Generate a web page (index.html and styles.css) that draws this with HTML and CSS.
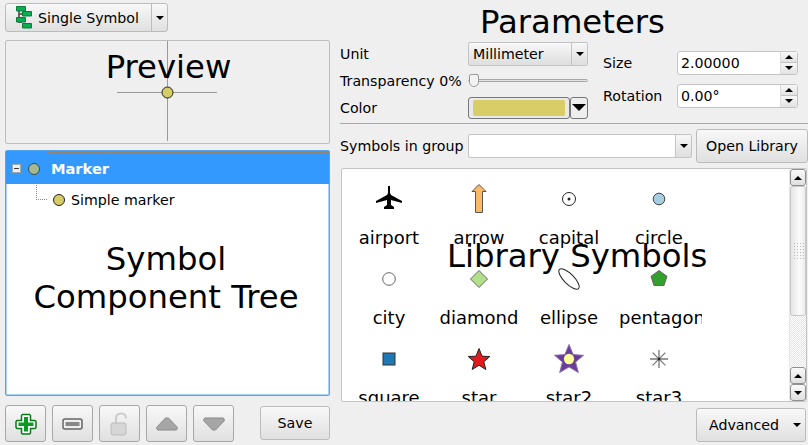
FILE: index.html
```html
<!DOCTYPE html>
<html lang="en">
<head>
    <meta charset="UTF-8">
    <title>Symbol Selector</title>
    <link rel="stylesheet" href="styles.css">
</head>
<body>
    <div class="dialog">
        <div class="left">
            <div class="split-button">
                <div class="split-main">
                    <svg width="16" height="23" viewBox="0 0 16 23"><path d="M3 5v11h3 M3 8h5" fill="none" stroke="#666" stroke-width="2"/><path d="M.5.5h9v4.500h-9z M6.500 5.500h9v4.500h-9z M.5 11.500h9v4.500h-9z M6.500 17.500h9v4.500h-9z" fill="#07ad50" stroke="#0b7a3c"/></svg>
                    <span>Single Symbol</span>
                </div>
                <div class="split-arrow"><i class="arrow-down"></i></div>
            </div>

            <div class="preview">
                <svg class="preview-cross" width="325" height="104" viewBox="0 0 325 104">
                    <path d="M112 52.500h100 M162.500 1v100" stroke="#999" fill="none"/>
                    <circle cx="162.500" cy="52.500" r="5.500" fill="#d6cc66" stroke="#222"/>
                </svg>
                <div class="annotation annotation-preview">Preview</div>
            </div>

            <div class="tree">
                <div class="tree-row tree-row-selected">
                    <span class="expander"></span>
                    <svg width="14" height="14" viewBox="0 0 14 14"><circle cx="7" cy="7" r="5.500" fill="#a5b88f" stroke="#2f4f55"/></svg>
                    <span class="tree-label">Marker</span>
                </div>
                <div class="tree-row tree-row-child">
                    <span class="elbow"></span>
                    <svg width="14" height="14" viewBox="0 0 14 14"><circle cx="7" cy="7" r="5.500" fill="#d6cc66" stroke="#222"/></svg>
                    <span>Simple marker</span>
                </div>
                <div class="annotation annotation-tree">Symbol<br>Component Tree</div>
            </div>

            <div class="toolbar">
                <button class="tool">
                    <svg width="22" height="22" viewBox="0 0 22 22"><path d="M7.500 1.500h7l1 1v5h4.500l1 1v6l-1 1h-4.500v4.500l-1 1h-7l-1-1v-4.500H2l-1-1v-6l1-1h4.500v-5z" fill="#fff" stroke="#067a16" stroke-width="1.500"/><path d="M9 4h4v5.500h5.500v3.500H13v5.500H9V13H3.500V9.500H9z" fill="#0c9a22"/></svg>
                </button>
                <button class="tool">
                    <svg width="22" height="14" viewBox="0 0 22 14"><rect x="1" y="2" width="19" height="10" rx="2" fill="#eee" stroke="#666" stroke-width="1.500"/><rect x="3.500" y="5" width="14" height="4" fill="#888"/></svg>
                </button>
                <button class="tool">
                    <svg width="20" height="24" viewBox="0 0 20 24"><path d="M6 11V6.500C6 3 8.500 1.500 11 1.500S16 3 16 6.500" fill="none" stroke="#ccc" stroke-width="2"/><rect x="1" y="11" width="15" height="12" rx="2" fill="#d6d6d6" stroke="#bbb"/></svg>
                </button>
                <button class="tool">
                    <svg width="22" height="14" viewBox="0 0 22 14"><path d="M9.500 1h3L21.500 10.500 20.500 13h-19L.5 10.500z" fill="#a6a6a6" stroke="#8a8a8a"/></svg>
                </button>
                <button class="tool">
                    <svg width="22" height="14" viewBox="0 0 22 14"><path d="M1.500 1h19l1 2.500L12.500 13h-3L.5 3.500z" fill="#a6a6a6" stroke="#8a8a8a"/></svg>
                </button>
                <button class="btn save">Save</button>
            </div>
        </div>

        <div class="right">
            <div class="annotation annotation-params">Parameters</div>
            <div class="params">
                <div class="params-left">
                    <div class="param-row">
                        <label>Unit</label>
                        <div class="combo combo-unit"><span>Millimeter</span><div class="combo-arrow"><i class="arrow-down"></i></div></div>
                    </div>
                    <div class="param-row">
                        <label>Transparency 0%</label>
                        <div class="slider"><span class="slider-handle"></span></div>
                    </div>
                    <div class="param-row">
                        <label>Color</label>
                        <div class="color-btn"><span class="swatch"></span></div>
                        <div class="color-drop"><i class="arrow-big"></i></div>
                    </div>
                </div>
                <div class="params-right">
                    <div class="param-row">
                        <label>Size</label>
                        <div class="spin"><span>2.00000</span><div class="spin-arrows"><b><i class="arrow-up"></i></b><b><i class="arrow-down"></i></b></div></div>
                    </div>
                    <div class="param-row">
                        <label>Rotation</label>
                        <div class="spin"><span>0.00°</span><div class="spin-arrows"><b><i class="arrow-up"></i></b><b><i class="arrow-down"></i></b></div></div>
                    </div>
                </div>
            </div>

            <div class="separator"></div>

            <div class="group-row">
                <label>Symbols in group</label>
                <div class="combo combo-group"><span></span><div class="combo-arrow"><i class="arrow-down"></i></div></div>
                <button class="btn open-library">Open Library</button>
            </div>

            <div class="library">
                <div class="symbols">
                    <div class="symbol">
                        <svg width="30" height="30" viewBox="0 0 30 30"><path d="M14 2h2v7l1 2 11 6v2l-11-3v5l3 2v2h-10v-2l3-2v-5L2 19v-2l11-6 1-2z" fill="#000"/></svg>
                        <span>airport</span>
                    </div>
                    <div class="symbol">
                        <svg width="30" height="30" viewBox="0 0 30 30"><path d="M15 .5l7 7h-3.500v21h-7v-21H8z" fill="#f9b967" stroke="#555"/></svg>
                        <span>arrow</span>
                    </div>
                    <div class="symbol">
                        <svg width="30" height="30" viewBox="0 0 30 30"><circle cx="15" cy="15" r="6.500" fill="#fff" stroke="#222"/><circle cx="15" cy="15" r="1.500" fill="#222"/></svg>
                        <span>capital</span>
                    </div>
                    <div class="symbol">
                        <svg width="30" height="30" viewBox="0 0 30 30"><circle cx="15" cy="15" r="5.800" fill="#a6cee3" stroke="#444"/></svg>
                        <span>circle</span>
                    </div>
                    <div class="symbol">
                        <svg width="30" height="30" viewBox="0 0 30 30"><circle cx="15" cy="15" r="6.300" fill="#fff" stroke="#666"/></svg>
                        <span>city</span>
                    </div>
                    <div class="symbol">
                        <svg width="30" height="30" viewBox="0 0 30 30"><path d="M15 6.500l8.500 8.500-8.500 8.500L6.500 15z" fill="#b2df8a" stroke="#666"/></svg>
                        <span>diamond</span>
                    </div>
                    <div class="symbol">
                        <svg width="30" height="30" viewBox="0 0 30 30"><ellipse cx="15" cy="15" rx="13.500" ry="5" transform="rotate(45 15 15)" fill="#fff" stroke="#222"/></svg>
                        <span>ellipse</span>
                    </div>
                    <div class="symbol symbol-clipped">
                        <svg width="30" height="30" viewBox="0 0 30 30"><path d="M15 6.500l8 5.800-3 9.200h-10l-3-9.200z" fill="#33a02c" stroke="#666"/></svg>
                        <span>pentagon</span>
                    </div>
                    <div class="symbol">
                        <svg width="30" height="30" viewBox="0 0 30 30"><rect x="9" y="9" width="12" height="12" fill="#1f78b4" stroke="#333"/></svg>
                        <span>square</span>
                    </div>
                    <div class="symbol">
                        <svg width="30" height="30" viewBox="0 0 30 30"><path d="M15 4.500l3 7.700 7.800.3-6 5.200 2 7.800L15 21.200 8.200 25.500l2-7.800-6-5.200 7.800-.3z" fill="#e31a1c" stroke="#222"/></svg>
                        <span>star</span>
                    </div>
                    <div class="symbol">
                        <svg width="32" height="32" viewBox="0 0 32 32"><path d="M16 .5l4.500 10.800 11 .8-8.500 7.200 3 11.200L16 24.500 6 30.500l3-11.200L.5 12l11-.7z" fill="#6a3d9a" stroke="#8c70b0"/><circle cx="16" cy="16" r="5.500" fill="#ffff99"/></svg>
                        <span>star2</span>
                    </div>
                    <div class="symbol">
                        <svg width="30" height="30" viewBox="0 0 30 30"><path d="M15 6v18 M6 15h18 M8.600 8.600l12.800 12.800 M21.400 8.600L8.600 21.400" stroke="#777" stroke-width="1.300" fill="none"/><circle cx="15" cy="15" r="1.200" fill="#222"/></svg>
                        <span>star3</span>
                    </div>
                </div>
                <div class="scrollbar">
                    <b class="scroll-btn"><i class="arrow-up"></i></b>
                    <div class="scroll-thumb"><span class="grip"></span></div>
                    <div class="scroll-track"></div>
                    <b class="scroll-btn"><i class="arrow-up"></i></b>
                    <b class="scroll-btn"><i class="arrow-down"></i></b>
                </div>
            </div>
            <div class="annotation annotation-library">Library Symbols</div>

            <div class="bottom-row">
                <button class="btn advanced"><span>Advanced</span><i class="arrow-down"></i></button>
            </div>
        </div>
    </div>
</body>
</html>
```

FILE: styles.css
```css
html, body {
    margin: 0;
    height: 100%;
    overflow: hidden;
}
body {
    background-color: #efefef;
    color: #000;
    font-family: "DejaVu Sans", sans-serif;
    font-size: 14.2px;
}
.dialog {
    display: flex;
    width: 808px;
    height: 445px;
    position: relative;
}
.left {
    width: 325px;
    margin-left: 5px;
    display: flex;
    flex-direction: column;
}
.right {
    width: 468px;
    margin-left: 10px;
    display: flex;
    flex-direction: column;
}

/* annotations drawn over the widgets */
.annotation {
    position: absolute;
    font-size: 32.3px;
    line-height: 38px;
    text-align: center;
    white-space: nowrap;
    color: #000;
}
.annotation-preview {
    left: 2px;
    right: 0;
    top: 7px;
}
.annotation-tree {
    left: -3px;
    right: 0;
    top: 89px;
}
.annotation-params {
    left: 480px;
    top: 3px;
}
.annotation-library {
    left: 447px;
    top: 237px;
}

/* buttons */
.btn, .tool, .split-button {
    border: 1px solid #bcbcbc;
    border-radius: 3px;
    background: linear-gradient(#f8f8f8, #e0e0e0);
    font: inherit;
    padding: 0;
}
.arrow-down, .arrow-up {
    display: block;
    width: 0;
    height: 0;
    border-left: 4px solid transparent;
    border-right: 4px solid transparent;
}
.arrow-down {
    border-top: 4px solid #000;
}
.arrow-up {
    border-bottom: 4px solid #000;
}
.arrow-big {
    display: block;
    width: 0;
    height: 0;
    border-left: 7px solid transparent;
    border-right: 7px solid transparent;
    border-top: 7px solid #000;
}
.split-button {
    display: flex;
    width: 161px;
    height: 27px;
    margin-top: 3px;
}
.split-main {
    flex: 1;
    display: flex;
    align-items: center;
    gap: 6px;
    padding-left: 10px;
    border-right: 1px solid #bcbcbc;
}
.split-arrow {
    width: 15px;
    display: flex;
    align-items: center;
    justify-content: center;
}
.preview {
    position: relative;
    height: 102px;
    margin-top: 8px;
    border: 1px solid #bdbdbd;
    border-radius: 2px;
}
.preview-cross {
    display: block;
    margin: -1px;
}

/* tree */
.tree {
    position: relative;
    height: 244px;
    margin-top: 6px;
    border: 1px solid #55a6f2;
    border-radius: 2px;
    background-color: #fff;
    box-shadow: inset 0 0 0 1px #a9d2f8;
}
.tree-row {
    display: flex;
    align-items: center;
}
.tree-row-selected {
    box-sizing: border-box;
    background-color: #3399ff;
    color: #fff;
    font-weight: bold;
    font-size: 14.6px;
    gap: 6px;
    padding: 1px 0 0 6px;
    height: 33px;
    border-top: 1px solid #c27b2e;
}
.tree-label {
    flex: 1;
    align-self: stretch;
    display: flex;
    align-items: center;
    padding-left: 3px;
    margin-top: -1px;
    border: 1px dotted rgba(190, 120, 50, 0.7);
}
.expander {
    width: 7px;
    height: 7px;
    border: 1px solid #9aa;
    background: linear-gradient(#3a3a3a, #3a3a3a) center / 5px 1px no-repeat, #eee;
}
.tree-row-child {
    height: 31px;
    padding-left: 30px;
    gap: 5px;
}
.elbow {
    width: 10px;
    height: 16px;
    margin-top: -16px;
    border-left: 1px dotted #888;
    border-bottom: 1px dotted #888;
}

/* bottom left toolbar */
.toolbar {
    display: flex;
    align-items: flex-start;
    gap: 6px;
    margin-top: 9px;
}
.tool {
    width: 41px;
    height: 37px;
    display: flex;
    align-items: center;
    justify-content: center;
    border-color: #a8a8a8;
}
.save {
    width: 70px;
    height: 34px;
    margin-left: 20px;
    margin-top: 1px;
}

/* parameters */
.params {
    display: flex;
    padding-top: 40px;
    height: 123px;
    box-sizing: border-box;
}
.params-left {
    width: 248px;
}
.params-right {
    width: 196px;
    margin-left: 15px;
    padding-top: 6px;
}
.param-row {
    display: flex;
    align-items: center;
    height: 27px;
}
.params-left label,
.group-row label {
    width: 128px;
    white-space: nowrap;
    flex-shrink: 0;
}
.params-right label {
    width: 74px;
}
.params-right .param-row {
    height: 33px;
}
.combo {
    display: flex;
    height: 22px;
    align-items: center;
    border: 1px solid #c4c4c4;
    border-radius: 2px;
}
.combo > span {
    flex: 1;
    padding-left: 4px;
}
.combo-unit {
    width: 118px;
    background: linear-gradient(#f7f7f7, #dedede);
}
.combo-group {
    width: 222px;
    background-color: #fff;
}
.combo-arrow {
    width: 15px;
    height: 100%;
    display: flex;
    align-items: center;
    justify-content: center;
    border-left: 1px solid #c4c4c4;
    background: linear-gradient(#f7f7f7, #dedede);
}
.slider {
    position: relative;
    width: 120px;
    height: 3px;
    background-color: #e4e4e4;
    border: 1px solid #a6a6a6;
    border-radius: 2px;
    box-sizing: border-box;
}
.slider-handle {
    position: absolute;
    left: 0;
    top: -6px;
    width: 8px;
    height: 11px;
    border: 1px solid #9a9a9a;
    border-radius: 2px 2px 5px 5px;
    background-color: #f2f2f2;
}
.color-btn {
    width: 92px;
    height: 16px;
    padding: 2px 4px;
    border: 1px solid #777;
    border-radius: 3px;
    background-color: #e9e9e9;
    display: flex;
}
.swatch {
    flex: 1;
    border-radius: 2px;
    background-color: #d8cd67;
}
.color-drop {
    width: 16px;
    height: 20px;
    border: 1px solid #777;
    border-radius: 3px;
    background-color: #eee;
    display: flex;
    align-items: center;
    justify-content: center;
}
.spin {
    display: flex;
    align-items: center;
    width: 119px;
    height: 22px;
    border: 1px solid #c4c4c4;
    border-radius: 3px;
    background-color: #fff;
}
.spin > span {
    flex: 1;
    padding-left: 3px;
}
.spin-arrows {
    width: 16px;
    height: 100%;
    display: flex;
    flex-direction: column;
    border-left: 1px solid #ddd;
}
.spin-arrows b {
    flex: 1;
    display: flex;
    align-items: center;
    justify-content: center;
    background: linear-gradient(#f7f7f7, #e2e2e2);
}
.spin-arrows b + b {
    border-top: 1px solid #c4c4c4;
}
.separator {
    height: 1px;
    background-color: #a8a8a8;
}
.group-row {
    display: flex;
    align-items: center;
    height: 44px;
}
.open-library {
    width: 112px;
    height: 34px;
    margin-left: 4px;
    flex-shrink: 0;
}

/* library list */
.library {
    display: flex;
    width: 466px;
    height: 234px;
    margin-left: 1px;
    border: 1px solid #c4c4c4;
    border-radius: 2px;
    background-color: #fff;
    box-sizing: border-box;
    overflow: hidden;
    flex-shrink: 0;
}
.symbols {
    flex: 1;
    display: grid;
    grid-template-columns: repeat(4, 90px);
    grid-auto-rows: 80px;
    padding: 15px 0 0 2px;
    align-content: start;
}
.symbol {
    display: flex;
    flex-direction: column;
    align-items: center;
    overflow: hidden;
}
.symbol svg {
    height: 30px;
    flex-shrink: 0;
}
.symbol span {
    font-size: 18px;
    line-height: 22px;
    margin-top: 13px;
    white-space: nowrap;
}
.symbol-clipped span {
    margin-left: 6px;
    clip-path: inset(0 3px 0 0);
}
.scrollbar {
    width: 16px;
    display: flex;
    flex-direction: column;
    background-color: #fff;
    border-left: 1px solid #e6e6e6;
}
.scroll-btn {
    height: 15px;
    flex-shrink: 0;
    display: flex;
    align-items: center;
    justify-content: center;
    border: 1px solid #8f8f8f;
    border-radius: 3px;
    background: linear-gradient(#fafafa, #dfdfdf);
}
.scroll-thumb {
    height: 128px;
    flex-shrink: 0;
    border: 1px solid #c8c8c8;
    border-radius: 2px;
    background: linear-gradient(90deg, #e4e4e4, #fbfbfb 60%, #ececec);
    display: flex;
    align-items: center;
    justify-content: center;
}
.grip {
    width: 11px;
    height: 18px;
    background-image: radial-gradient(#b8b8b8 1px, transparent 1px);
    background-size: 3px 3px;
}
.scroll-track {
    flex: 1;
    background: repeating-conic-gradient(#e4e4e4 0 25%, #fff 0 50%) 0 0 / 2px 2px;
}
.bottom-row {
    display: flex;
    justify-content: flex-end;
    padding-top: 6px;
    padding-right: 2px;
}
.advanced {
    width: 110px;
    height: 34px;
    display: flex;
    align-items: center;
    justify-content: space-between;
    padding: 0 4px 0 12px;
}
```
